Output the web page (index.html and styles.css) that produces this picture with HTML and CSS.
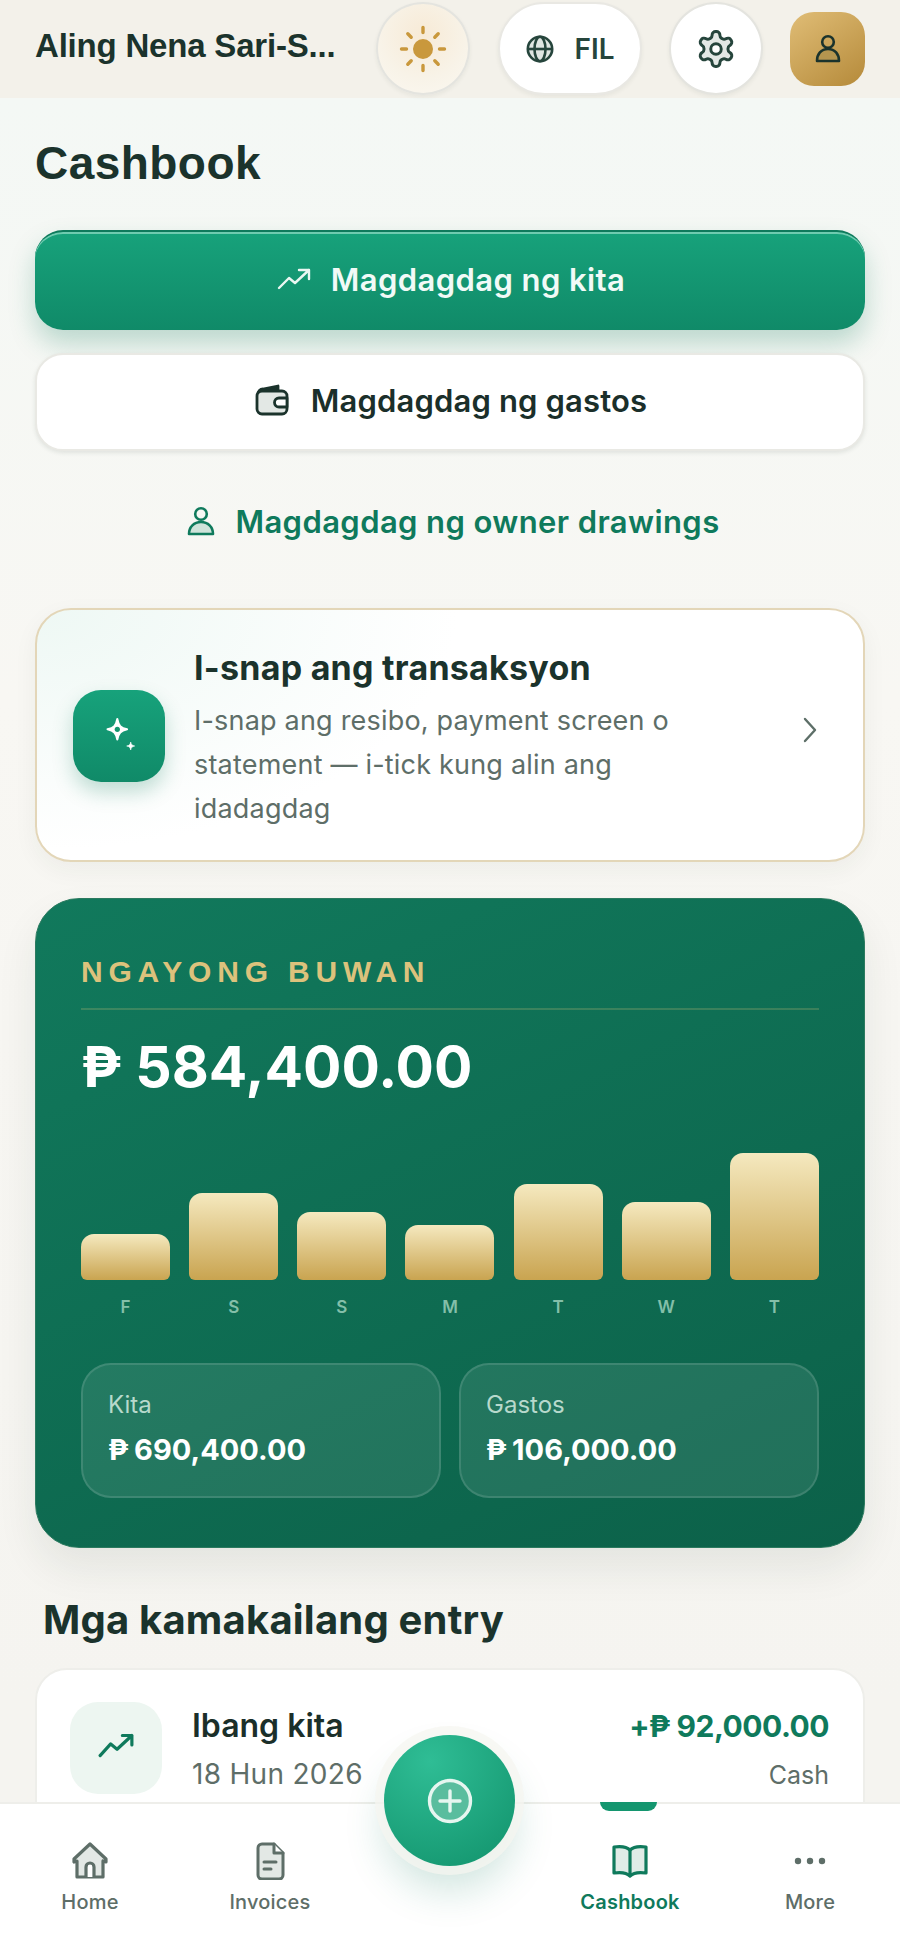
FILE: index.html
```html
<!DOCTYPE html>
<html lang="fil">
<head>
<meta charset="utf-8">
<title>Cashbook</title>
<link rel="stylesheet" href="styles.css">
</head>
<body>
<div class="app">
  <header class="topbar">
    <div class="shop">Aling Nena Sari-S...</div>
    <button class="round sun">
      <svg width="50" height="50" viewBox="0 0 50 50" fill="none" stroke="#c9983c" stroke-width="3.400" stroke-linecap="round"><circle cx="25" cy="25" r="10" fill="#c9983c" stroke="none"/><path d="M25 3.500v5M25 41.500v5M3.500 25h5M41.500 25h5M9.800 9.800l3.400 3.400M36.800 36.800l3.400 3.400M9.800 40.200l3.400-3.400M36.800 13.200l3.400-3.400"/></svg>
    </button>
    <button class="pill">
      <svg width="30" height="30" viewBox="0 0 30 30" fill="#dfe6e2" stroke="#26453c" stroke-width="2.600"><circle cx="15" cy="15" r="12.200"/><ellipse cx="15" cy="15" rx="5.500" ry="12.200"/><path d="M3 15h24"/></svg>
      <span>FIL</span>
    </button>
    <button class="round gear">
      <svg width="42" height="42" viewBox="0 0 24 24" fill="#e3e8e5" stroke="#26453c" stroke-width="1.700" stroke-linejoin="round"><path d="M12.220 2h-.44a2 2 0 0 0-2 2v.18a2 2 0 0 1-1 1.730l-.43.25a2 2 0 0 1-2 0l-.15-.08a2 2 0 0 0-2.730.73l-.22.38a2 2 0 0 0 .73 2.730l.15.1a2 2 0 0 1 1 1.720v.51a2 2 0 0 1-1 1.740l-.15.09a2 2 0 0 0-.73 2.730l.22.38a2 2 0 0 0 2.730.73l.15-.08a2 2 0 0 1 2 0l.43.25a2 2 0 0 1 1 1.730V20a2 2 0 0 0 2 2h.44a2 2 0 0 0 2-2v-.18a2 2 0 0 1 1-1.730l.43-.25a2 2 0 0 1 2 0l.15.08a2 2 0 0 0 2.730-.73l.22-.39a2 2 0 0 0-.73-2.730l-.15-.08a2 2 0 0 1-1-1.740v-.5a2 2 0 0 1 1-1.740l.15-.09a2 2 0 0 0 .73-2.730l-.22-.38a2 2 0 0 0-2.730-.73l-.15.08a2 2 0 0 1-2 0l-.43-.25a2 2 0 0 1-1-1.730V4a2 2 0 0 0-2-2z"/><circle cx="12" cy="12" r="3" fill="#fff"/></svg>
    </button>
    <div class="avatar">
      <svg width="28" height="30" viewBox="0 0 28 30" fill="none" stroke="#1b332c" stroke-width="2.600" stroke-linejoin="round"><circle cx="14" cy="8" r="5.800"/><path d="M3 27c0-7 4-12 11-12s11 5 11 12z" fill="#b4954f"/></svg>
    </div>
  </header>

  <main class="content">
    <h1 class="title">Cashbook</h1>

    <button class="btn btn-primary">
      <svg width="34" height="22" viewBox="0 0 34 22" fill="none" stroke="#eaf7f2" stroke-width="2.400" stroke-linecap="round" stroke-linejoin="round"><path d="M2 20l10-10 6 5L32 2M22 2h10v9"/></svg>
      <span>Magdagdag ng kita</span>
    </button>
    <button class="btn btn-white">
      <svg width="34" height="32" viewBox="0 0 34 32" fill="#e3e8e5" stroke="#1b332c" stroke-width="2.800" stroke-linejoin="round"><path d="M3 10c0-3 2-5 5-5l15-3v4" fill="#1b332c"/><rect x="2" y="7" width="30" height="23" rx="5"/><path d="M32 14h-8a4.500 4.500 0 0 0 0 9h8z" fill="#fff"/></svg>
      <span>Magdagdag ng gastos</span>
    </button>
    <a class="btn btn-link">
      <svg width="28" height="30" viewBox="0 0 28 30" fill="none" stroke="#0f7a5c" stroke-width="2.600" stroke-linejoin="round"><circle cx="14" cy="8" r="5.800"/><path d="M2 28c0-7 5-12 12-12s12 5 12 12z" fill="#cfe3da"/></svg>
      <span>Magdagdag ng owner drawings</span>
    </a>

    <section class="snap">
      <div class="snap-icon">
        <svg width="40" height="40" viewBox="0 0 40 40" fill="#fff" stroke="#fff" stroke-linejoin="round"><path stroke-width="2" d="M18.300 3c1.200 6.400 3.300 9 9.800 10.300-6.500 1.300-8.600 3.900-9.800 10.300-1.200-6.400-3.300-9-9.800-10.300 6.500-1.300 8.600-3.900 9.800-10.300z"/><circle cx="18.300" cy="13.300" r="2.600" fill="#14966f" stroke="none"/><path stroke-width=".6" d="M31.700 26c.4 2.400 1.400 3.600 4 4-2.600.4-3.600 1.600-4 4-.4-2.400-1.400-3.600-4-4 2.600-.4 3.600-1.600 4-4z"/></svg>
      </div>
      <div class="snap-text">
        <h2>I-snap ang transaksyon</h2>
        <p>I-snap ang resibo, payment screen o statement — i-tick kung alin ang idadagdag</p>
      </div>
      <svg class="chev" width="16" height="26" viewBox="0 0 16 26" fill="none" stroke="#5d6f68" stroke-width="2.400" stroke-linecap="round" stroke-linejoin="round"><path d="M3 2l10 11L3 24"/></svg>
    </section>

    <section class="month">
      <div class="month-label">NGAYONG BUWAN</div>
      <div class="month-total">₱ 584,400.00</div>
      <div class="bars">
        <div class="bar-col"><div class="bar" style="height:46px"></div><span>F</span></div>
        <div class="bar-col"><div class="bar" style="height:87px"></div><span>S</span></div>
        <div class="bar-col"><div class="bar" style="height:68px"></div><span>S</span></div>
        <div class="bar-col"><div class="bar" style="height:55px"></div><span>M</span></div>
        <div class="bar-col"><div class="bar" style="height:96px"></div><span>T</span></div>
        <div class="bar-col"><div class="bar" style="height:78px"></div><span>W</span></div>
        <div class="bar-col"><div class="bar" style="height:127px"></div><span>T</span></div>
      </div>
      <div class="stats">
        <div class="stat"><div class="stat-label">Kita</div><div class="stat-value">₱ 690,400.00</div></div>
        <div class="stat"><div class="stat-label">Gastos</div><div class="stat-value">₱ 106,000.00</div></div>
      </div>
    </section>

    <h2 class="recent">Mga kamakailang entry</h2>
    <section class="entries">
      <div class="entry-icon">
        <svg width="36" height="26" viewBox="0 0 34 24" fill="none" stroke="#0f7a5c" stroke-width="3" stroke-linecap="round" stroke-linejoin="round"><path d="M2 22l10-11 6 5L32 3M23 3h9v9"/></svg>
      </div>
      <div class="entry-main">
        <div class="entry-name">Ibang kita</div>
        <div class="entry-date">18 Hun 2026</div>
      </div>
      <div class="entry-side">
        <div class="entry-amount">+₱ 92,000.00</div>
        <div class="entry-method">Cash</div>
      </div>
    </section>
  </main>

  <nav class="tabbar">
    <a class="tab">
      <svg width="38" height="38" viewBox="0 0 38 38" fill="#e3e8e5" stroke="#5e6e68" stroke-width="3.200" stroke-linejoin="round"><path d="M3 17L19 2l16 15v3l-3-1v16H6V19l-3 1z"/><path d="M15 35V25a4 4 0 0 1 8 0v10" fill="#fff"/></svg>
      <span>Home</span>
    </a>
    <a class="tab">
      <svg width="30" height="38" viewBox="0 0 30 38" fill="#e3e8e5" stroke="#5e6e68" stroke-width="3" stroke-linejoin="round" stroke-linecap="round"><path d="M3 6a4 4 0 0 1 4-4h12l9 9v22a4 4 0 0 1-4 4H7a4 4 0 0 1-4-4z"/><path d="M19 2v9h9" fill="#fff"/><path d="M9 20h12M9 27h7"/></svg>
      <span>Invoices</span>
    </a>
    <div class="tab-gap"></div>
    <a class="tab active">
      <svg width="36" height="34" viewBox="0 0 36 34" fill="#e0ece7" stroke="#0f7a5c" stroke-width="3.200" stroke-linejoin="round"><path d="M18 6c-3-3-9-4-16-3v26c7-1 13 0 16 3 3-3 9-4 16-3V3c-7-1-13 0-16 3z"/><path d="M18 6v26" fill="none"/></svg>
      <span>Cashbook</span>
    </a>
    <a class="tab">
      <svg width="38" height="38" viewBox="0 0 38 38" fill="#5e6e68"><circle cx="7" cy="19" r="3.200"/><circle cx="19" cy="19" r="3.200"/><circle cx="31" cy="19" r="3.200"/></svg>
      <span>More</span>
    </a>
    <i class="tab-marker"></i>
  </nav>
  <button class="fab">
    <svg width="46" height="46" viewBox="0 0 46 46" fill="#59bd9e" stroke="#e6f6f0" stroke-width="3.400" stroke-linecap="round"><circle cx="23" cy="23" r="20.500"/><path d="M23 13v20M13 23h20"/></svg>
  </button>
</div>
</body>
</html>
```

FILE: styles.css
```css
* { box-sizing: border-box; }
html, body { margin: 0; padding: 0; }
body {
  width: 900px;
  height: 1949px;
  overflow: hidden;
  font-family: "Inter", "Liberation Sans", sans-serif;
  color: #1b332c;
}
button { font: inherit; color: inherit; padding: 0; cursor: pointer; }
h1, h2, p { margin: 0; }

.app {
  position: relative;
  width: 900px;
  height: 1949px;
  overflow: hidden;
  background: linear-gradient(180deg, #f4f8f5 98px, #f8f7f3 700px, #f5f4f0 1700px);
}

.topbar {
  height: 98px;
  padding: 2px 35px 0;
  background: #f3f1ea;
  display: flex;
  align-items: flex-start;
}
.shop {
  width: 342px;
  font-family: "Liberation Sans", sans-serif;
  font-weight: 700;
  font-size: 33px;
  letter-spacing: -0.2px;
  line-height: 88px;
  white-space: nowrap;
}
.round {
  width: 93px;
  height: 93px;
  flex: none;
  border-radius: 50%;
  border: 2px solid #e4e4df;
  background: #fff;
  display: flex;
  align-items: center;
  justify-content: center;
  box-shadow: 0 2px 4px rgba(30, 50, 40, .06);
}
.sun { width: 94px; background: radial-gradient(circle at 50% 35%, #f7ead6 0, #f8f3e8 60%, #fbf8f1 100%); }
.gear { width: 94px; }
.pill {
  width: 144px;
  height: 93px;
  margin: 0 27px 0 28px;
  flex: none;
  border-radius: 47px;
  border: 2px solid #e9e8e3;
  background: #fff;
  display: flex;
  align-items: center;
  justify-content: center;
  gap: 19px;
  font-size: 28px;
  font-weight: 600;
  color: #26453c;
  box-shadow: 0 2px 4px rgba(30, 50, 40, .06);
}
.avatar {
  width: 75px;
  height: 74px;
  margin: 10px 0 0 27px;
  flex: none;
  border-radius: 24px;
  background: linear-gradient(145deg, #e0bd76, #b58a3a);
  display: flex;
  align-items: center;
  justify-content: center;
}

.content { padding: 0 35px; }
.title {
  font-family: "Liberation Sans", sans-serif;
  font-weight: 700;
  font-size: 46px;
  line-height: 56px;
  margin: 37px 0 39px;
  letter-spacing: .45px;
}

.btn {
  width: 100%;
  display: flex;
  align-items: center;
  justify-content: center;
  gap: 20px;
  font-size: 31px;
  font-weight: 600;
  letter-spacing: .4px;
}
.btn-primary {
  height: 100px;
  border: 0;
  border-top: 2px solid #0f7a5c;
  padding: 0 0 4px 2px;
  border-radius: 28px;
  color: #f1faf7;
  background: linear-gradient(180deg, #17a27b, #108a68);
  box-shadow: inset 0 2px 0 #6fcbb0, 0 14px 26px rgba(15, 122, 92, .25);
}
.btn-white {
  height: 98px;
  margin-top: 23px;
  padding: 0 0 4px 2px;
  border: 2px solid #e9e9e4;
  border-radius: 28px;
  background: #fff;
  color: #1b2f2a;
  letter-spacing: .15px;
  gap: 22px;
  box-shadow: 0 2px 4px rgba(30, 50, 40, .1);
}
.btn-link {
  height: 98px;
  margin-top: 22px;
  padding: 0 0 2px 7px;
  color: #0f7a5c;
}

.snap {
  margin-top: 37px;
  height: 254px;
  padding: 0 45px 0 36px;
  border: 2px solid #e3d6b8;
  border-radius: 36px;
  background: radial-gradient(ellipse 420px 240px at 0 0, #eef8f4, #fff 100%);
  box-shadow: 0 8px 24px rgba(30, 50, 40, .05);
  display: flex;
  align-items: center;
  position: relative;
}
.snap-icon {
  width: 92px;
  height: 92px;
  margin-top: 2px;
  flex: none;
  border-radius: 28px;
  background: linear-gradient(180deg, #17a27b, #108a68);
  box-shadow: 0 10px 20px rgba(15, 122, 92, .25);
  display: flex;
  align-items: center;
  justify-content: center;
}
.snap-text { width: 500px; margin-left: 29px; padding-top: 8px; flex: none; }
.snap-text h2 {
  font-weight: 700;
  font-size: 34px;
  line-height: 42px;
  letter-spacing: .25px;
}
.snap-text p {
  margin-top: 10px;
  font-size: 27px;
  line-height: 44px;
  font-weight: 400;
  letter-spacing: .2px;
  color: #5e6e68;
}
.chev { margin: 0 0 10px auto; }

.month {
  margin-top: 36px;
  height: 650px;
  padding: 45px 45px 0;
  border: 1px solid #2c7a5f;
  border-radius: 44px;
  background: linear-gradient(155deg, #11795c, #0c6149);
  box-shadow: 0 20px 40px rgba(30, 50, 40, .08);
  color: #fff;
}
.month-label {
  height: 66px;
  font-family: "Liberation Sans", sans-serif;
  font-weight: 700;
  font-size: 30px;
  letter-spacing: 5.800px;
  line-height: 56px;
  color: #dcc27c;
  border-bottom: 2px solid rgba(220, 194, 124, .22);
}
.month-total {
  margin-top: 22px;
  font-weight: 700;
  font-size: 57px;
  line-height: 70px;
  letter-spacing: 0;
}
.bars {
  margin-top: 51px;
  height: 177px;
  display: flex;
  justify-content: space-between;
}
.bar-col {
  width: 89px;
  display: flex;
  flex-direction: column;
  justify-content: flex-end;
  align-items: center;
}
.bar {
  width: 100%;
  border-radius: 13px 13px 6px 6px;
  background: linear-gradient(180deg, #f5e9bf, #c9a450);
}
.bar-col span {
  height: 50px;
  line-height: 54px;
  font-size: 17px;
  font-weight: 600;
  color: #84bfa9;
}
.stats {
  margin-top: 33px;
  display: grid;
  grid-template-columns: 1fr 1fr;
  gap: 18px;
}
.stat {
  height: 135px;
  padding: 24px 25px 0;
  border: 2px solid rgba(255, 255, 255, .12);
  border-radius: 30px;
  background: rgba(255, 255, 255, .09);
}
.stat-label {
  font-size: 24px;
  line-height: 32px;
  color: #b7d9cc;
}
.stat-value {
  margin-top: 10px;
  font-size: 29px;
  line-height: 38px;
  font-weight: 700;
  word-spacing: -1.500px;
}

.recent {
  margin: 47px 0 0 8px;
  font-weight: 700;
  font-size: 40px;
  line-height: 50px;
  letter-spacing: .2px;
}
.entries {
  margin-top: 23px;
  height: 170px;
  padding: 32px 34px 0 33px;
  border: 2px solid #eeeeea;
  border-radius: 32px 32px 0 0;
  background: #fff;
  display: flex;
  align-items: flex-start;
}
.entry-icon {
  width: 92px;
  height: 92px;
  flex: none;
  padding-bottom: 6px;
  border-radius: 28px;
  background: #edf6f1;
  display: flex;
  align-items: center;
  justify-content: center;
}
.entry-main { margin-left: 30px; padding-top: 2px; }
.entry-name { font-size: 32px; line-height: 44px; font-weight: 600; color: #1b2f2a; }
.entry-date { margin-top: 6px; font-size: 28px; line-height: 40px; letter-spacing: .3px; color: #5e6e68; }
.entry-side { margin-left: auto; padding-top: 2px; text-align: right; }
.entry-amount { font-size: 30px; line-height: 44px; font-weight: 700; letter-spacing: -.5px; color: #0f7a5c; }
.entry-method { margin-top: 7px; font-size: 25px; line-height: 40px; color: #5e6e68; }

.tabbar {
  position: absolute;
  left: 0;
  right: 0;
  bottom: 0;
  height: 147px;
  background: #fff;
  border-top: 2px solid #eeeeea;
  display: grid;
  grid-template-columns: repeat(5, 180px);
}
.tab {
  padding-top: 38px;
  display: flex;
  flex-direction: column;
  align-items: center;
  gap: 10px;
  font-size: 20px;
  font-weight: 500;
  letter-spacing: .2px;
  color: #5e6e68;
}
.tab svg { height: 38px; }
.tab.active { color: #0f7a5c; font-weight: 600; }
.tab-marker {
  position: absolute;
  top: -2px;
  left: 600px;
  width: 57px;
  height: 9px;
  border-radius: 0 0 9px 9px;
  background: #14966f;
}
.fab {
  position: absolute;
  left: 384px;
  top: 1735px;
  width: 131px;
  height: 131px;
  border: 0;
  border-radius: 50%;
  background: radial-gradient(circle at 35% 20%, #2fbd95, #14966f 90%);
  box-shadow: 0 0 0 9px rgba(245, 245, 240, .75), 0 24px 40px rgba(15, 122, 92, .2);
  display: flex;
  align-items: center;
  justify-content: center;
}
```
